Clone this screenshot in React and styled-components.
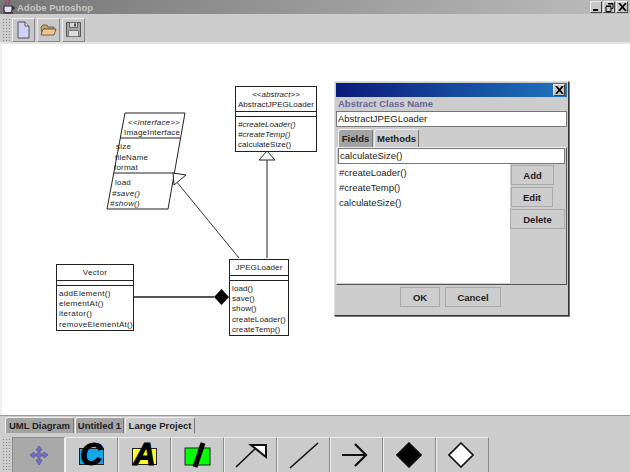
import styled, { createGlobalStyle } from "styled-components";

const Global = createGlobalStyle`
html, body { margin: 0; padding: 0; background: #ccc; overflow: hidden; }
* { box-sizing: border-box; }
`;

const Frame = styled.div`
width: 630px;
height: 472px;
display: flex;
flex-direction: column;
font-family: "Liberation Sans", Arial, sans-serif;
background: #cdcdcd;
color: #111;
`;

const TitleBar = styled.div`
height: 14px;
display: flex;
align-items: center;
padding: 0 2px;
background: linear-gradient(to right, #767676, #bdbdbd);
`;

const TitleText = styled.span`
margin-left: 2px;
font-size: 9.5px;
font-weight: 700;
color: #c6c6c6;
flex: 1;
`;

const WinButton = styled.div`
width: 12px;
height: 12px;
margin-left: 1px;
display: flex;
align-items: center;
justify-content: center;
background: #c8c8c8;
border: 1px solid;
border-color: #eee #444 #444 #eee;
`;

const ToolBar = styled.div`
height: 28px;
display: flex;
align-items: center;
padding: 3px 0 0 2px;
gap: 2px;
background: #cdcdcd;
`;

const Grip = styled.div`
width: 8px;
height: ${(p) => p.$h}px;
margin-right: ${(p) => p.$mr}px;
background-image: radial-gradient(#8a8a8a 0.8px, transparent 1px);
background-size: 3px 3px;
`;

const IconButton = styled.div`
width: 23px;
height: 24px;
display: flex;
align-items: center;
justify-content: center;
background: #c8c8c8;
border: 1px solid;
border-color: #eee #888 #888 #eee;
`;

const Canvas = styled.div`
position: relative;
height: 373px;
background: #fff;
border-top: 2px solid #e4e4e4;
border-left: 2px solid #eee;
`;

const Wires = styled.svg`
position: absolute;
left: -2px;
top: -2px;
`;

const ClassNode = styled.div`
position: absolute;
left: ${(p) => p.$x}px;
top: ${(p) => p.$y}px;
width: ${(p) => p.$w}px;
background: #fff;
border: 1px solid #222;
font-size: 8px;
letter-spacing: ${(p) => p.$ls}px;
color: #222;
`;

const Section = styled.div`
height: ${(p) => (p.$h ? `${p.$h}px` : "auto")};
border-top: ${(p) => (p.$first ? "none" : "1px solid #222")};
padding: ${(p) => (p.$center ? "2px 0 0" : "3px 0 0 2px")};
text-align: ${(p) => (p.$center ? "center" : "left")};
line-height: 10.2px;
display: ${(p) => (p.$center ? "flex" : "block")};
flex-direction: column;
justify-content: center;
`;

const Spacer = styled.div`
height: 5px;
border-top: 1px solid #222;
`;

const Member = styled.div`
font-style: ${(p) => (p.$italic ? "italic" : "normal")};
white-space: nowrap;
`;

const InterfaceNode = styled.div`
position: absolute;
left: 103px;
top: 68px;
width: 82px;
height: 98px;
font-size: 8px;
letter-spacing: 0.2px;
color: #222;
`;

const InterfaceShape = styled.svg`
position: absolute;
left: 0;
top: 0;
`;

const InterfaceRow = styled.div`
position: absolute;
left: ${(p) => p.$x}px;
top: ${(p) => p.$y}px;
font-style: ${(p) => (p.$italic ? "italic" : "normal")};
white-space: nowrap;
`;

const Dialog = styled.div`
position: absolute;
left: 332px;
top: 37px;
width: 235px;
height: 235px;
display: flex;
flex-direction: column;
background: #cdcdcd;
border: 1px solid;
border-color: #ddd #333 #333 #ddd;
box-shadow: 1px 1px 0 #777;
padding: 1px;
`;

const DialogTitle = styled.div`
height: 14px;
flex: none;
display: flex;
justify-content: flex-end;
align-items: center;
padding-right: 2px;
background: linear-gradient(to right, #0a1a78, #1f74bd);
`;

const DialogLabel = styled.div`
height: 14px;
flex: none;
font-size: 9.5px;
font-weight: 700;
line-height: 14px;
padding-left: 2px;
color: #66669a;
`;

const TextInput = styled.div`
height: 16px;
flex: none;
background: #fff;
border: 1px solid #777;
font-size: 9.5px;
line-height: 14px;
padding-left: 1px;
color: #222;
`;

const TabRow = styled.div`
display: flex;
height: ${(p) => p.$h}px;
flex: none;
align-items: flex-end;
padding-left: ${(p) => p.$pad}px;
gap: 1px;
`;

const Tab = styled.div`
height: ${(p) => p.$h}px;
width: ${(p) => p.$w}px;
flex: none;
font-size: 9.5px;
font-weight: 700;
white-space: nowrap;
text-align: center;
line-height: ${(p) => p.$h - 1}px;
color: #222;
background: ${(p) => (p.$active ? "#cdcdcd" : "#a3a3a3")};
border: 1px solid;
border-bottom: none;
border-color: #eee #777 #777 #eee;
border-radius: 3px 3px 0 0;
`;

const TabPanel = styled.div`
height: 138px;
flex: none;
padding: 0 1px 1px 0;
display: flex;
flex-direction: column;
border: 1px solid;
border-color: #eee #555 #555 #eee;
`;

const PanelInput = styled(TextInput)`
margin-left: 1px;
width: 227px;
`;

const PanelBody = styled.div`
flex: 1;
display: flex;
min-height: 0;
`;

const MemberList = styled.div`
width: 173px;
flex: none;
background: #fff;
padding: 1px 0 0 2px;
font-size: 9.5px;
line-height: 15px;
color: #222;
`;

const SideButtons = styled.div`
flex: 1;
display: flex;
flex-direction: column;
align-items: flex-start;
gap: 2px;
padding-top: 1px;
`;

const PushButton = styled.div`
width: ${(p) => p.$w}px;
height: 20px;
flex: none;
margin-left: ${(p) => p.$ml || 0}px;
display: flex;
align-items: center;
justify-content: center;
font-size: 9.5px;
font-weight: 700;
color: #222;
background: #cdcdcd;
border: 1px solid;
border-color: #eee #777 #777 #eee;
outline: 1px solid #aaa;
outline-offset: -1px;
`;

const DialogActions = styled.div`
flex: 1;
display: flex;
justify-content: center;
align-items: center;
gap: 5px;
padding-right: 2px;
padding-bottom: 5px;
`;

const BottomTabs = styled(TabRow)`
background: #cdcdcd;
border-top: 1px solid #999;
`;

const ShapeBar = styled.div`
flex: 1;
display: flex;
align-items: flex-end;
padding-left: 2px;
background: #cdcdcd;
`;

const ShapeButton = styled.div`
width: 53px;
height: 35px;
flex: none;
display: flex;
align-items: center;
justify-content: center;
padding-right: ${(p) => p.$pr || 0}px;
background: ${(p) => (p.$pressed ? "#a9a9a9" : "#cbcbcb")};
border: 1px solid;
border-bottom: none;
border-color: ${(p) => (p.$pressed ? "#8c8c8c #eee #eee #8c8c8c" : "#eee #8c8c8c #8c8c8c #eee")};
`;

const LetterIcon = styled.div`
position: relative;
width: 34px;
height: 26px;
display: flex;
align-items: center;
justify-content: center;
`;

const LetterBack = styled.div`
position: absolute;
left: 4px;
top: 6px;
width: 25px;
height: 17px;
background: ${(p) => p.$color};
border: 1px solid #222;
`;

const Letter = styled.span`
position: relative;
font-size: 31px;
font-weight: 700;
font-style: italic;
line-height: 26px;
color: #000;
-webkit-text-stroke: 1px #000;
`;

function JavaCup() {
  return (
    <svg width="13" height="14" viewBox="0 0 13 14">
      <path d="M2 6h8v4c0 2-2 3-4 3s-4-1-4-3z" fill="#dfe0f0" stroke="#222" />
      <path d="M10 7h2v2h-2" fill="none" stroke="#222" />
      <path d="M4 1c1 1-1 2 0 3M7 0c1 1-1 3 0 4" fill="none" stroke="#b03050" strokeWidth="1.4" />
      <path d="M1 13h10" stroke="#222" />
    </svg>
  );
}

function MinIcon() {
  return (
    <svg width="9" height="8" viewBox="0 0 9 8">
      <path d="M1 7h5" stroke="#000" strokeWidth="2" />
    </svg>
  );
}

function MaxIcon() {
  return (
    <svg width="9" height="9" viewBox="0 0 9 9">
      <path d="M3 .5h5v5h-2M1 3.5h5v5h-5z" fill="none" stroke="#000" />
      <path d="M1 3h5M3 1h5" stroke="#000" />
    </svg>
  );
}

function CloseIcon() {
  return (
    <svg width="9" height="8" viewBox="0 0 9 8">
      <path d="M1 0l7 8M8 0l-7 8" stroke="#000" strokeWidth="1.8" />
    </svg>
  );
}

function NewIcon() {
  return (
    <svg width="13" height="18" viewBox="0 0 13 18">
      <path d="M1 1h7l4 4v12h-11z" fill="#d2d2f6" stroke="#555" />
      <path d="M8 1v4h4" fill="#e8e8f8" stroke="#555" />
    </svg>
  );
}

function OpenIcon() {
  return (
    <svg width="17" height="12" viewBox="0 0 17 12">
      <path d="M1 3l2-2h4l1 2h6v2h-10l-2 5z" fill="#d89c5c" stroke="#665" />
      <path d="M1 11l2-6h13l-2 6z" fill="#f4c48c" stroke="#665" />
    </svg>
  );
}

function SaveIcon() {
  return (
    <svg width="15" height="15" viewBox="0 0 15 15">
      <path d="M.5 .5h14v14h-14z" fill="#a4a4a4" stroke="#555" />
      <path d="M3.5 .5h8v5h-8z" fill="#d4d4d4" stroke="#666" />
      <path d="M8 1.5h2v3h-2z" fill="#555" />
      <path d="M2.5 8.5h10v6h-10z" fill="#dcdcdc" stroke="#777" />
    </svg>
  );
}

function MoveIcon() {
  return (
    <svg width="20" height="20" viewBox="0 0 20 20" fill="#7a72c0" stroke="#5a52a4" strokeWidth="0.8">
      <path d="M10 1l3 4h-2v4h4v-2l4 3-4 3v-2h-4v4h2l-3 5-3-5h2v-4h-4v2l-4-3 4-3v2h4v-4h-2z" />
    </svg>
  );
}

function SlashIcon() {
  return (
    <svg width="34" height="26" viewBox="0 0 34 26">
      <rect x="4" y="6" width="25" height="17" fill="#0f0" stroke="#222" />
      <path d="M22 1l-8 24" stroke="#000" strokeWidth="5" />
    </svg>
  );
}

function InheritIcon() {
  return (
    <svg width="34" height="28" viewBox="0 0 34 28">
      <path d="M2 26L22 7" stroke="#111" strokeWidth="1.6" />
      <path d="M17 4h15v12z" fill="#fff" stroke="#111" strokeWidth="2" />
    </svg>
  );
}

function LineIcon() {
  return (
    <svg width="34" height="28" viewBox="0 0 34 28">
      <path d="M3 27L31 2" stroke="#111" strokeWidth="1.6" />
    </svg>
  );
}

function ArrowIcon() {
  return (
    <svg width="30" height="26" viewBox="0 0 30 26">
      <path d="M2 13h24M15 2l11 11-11 11" fill="none" stroke="#111" strokeWidth="2.2" />
    </svg>
  );
}

function DiamondIcon({ fill }) {
  return (
    <svg width="26" height="26" viewBox="0 0 26 26">
      <path d="M13 1l12 12-12 12L1 13z" fill={fill} stroke="#111" strokeWidth="1.6" />
    </svg>
  );
}

export default function App() {
  return (
    <Frame>
      <Global />
      <TitleBar>
        <JavaCup />
        <TitleText>Adobe Putoshop</TitleText>
        <WinButton><MinIcon /></WinButton>
        <WinButton><MaxIcon /></WinButton>
        <WinButton><CloseIcon /></WinButton>
      </TitleBar>
      <ToolBar>
        <Grip $h={24} $mr={0} />
        <IconButton><NewIcon /></IconButton>
        <IconButton><OpenIcon /></IconButton>
        <IconButton><SaveIcon /></IconButton>
      </ToolBar>
      <Canvas>
        <Wires width="630" height="373">
          <path d="M133 255H214" stroke="#555" strokeWidth="2" />
          <path d="M214 255l7.5-8 7.5 8-7.5 8z" fill="#000" />
          <path d="M267 118V216" stroke="#222" />
          <path d="M259 118l8-9 8 9z" fill="#fff" stroke="#222" />
          <path d="M176 139L239 216" stroke="#333" />
        </Wires>

        <InterfaceNode>
          <InterfaceShape width="82" height="98">
            <path d="M20 1H80L63 97H2z" fill="#fff" stroke="#222" />
            <path d="M15 26H76M9 61H70" stroke="#222" />
            <path d="M68 61l13 2-12 10z" fill="#fff" stroke="#222" />
          </InterfaceShape>
          <InterfaceRow $x={23} $y={6} $italic>&lt;&lt;interface&gt;&gt;</InterfaceRow>
          <InterfaceRow $x={19} $y={16}>ImageInterface</InterfaceRow>
          <InterfaceRow $x={11} $y={30}>size</InterfaceRow>
          <InterfaceRow $x={10} $y={41}>fileName</InterfaceRow>
          <InterfaceRow $x={9} $y={51}>format</InterfaceRow>
          <InterfaceRow $x={10} $y={66}>load</InterfaceRow>
          <InterfaceRow $x={7} $y={77} $italic>#save()</InterfaceRow>
          <InterfaceRow $x={5} $y={87} $italic>#show()</InterfaceRow>
        </InterfaceNode>

        <ClassNode $x={233} $y={42} $w={82} $ls={0.05}>
          <Section $first $center $h={24}>
            <Member $italic>&lt;&lt;abstract&gt;&gt;</Member>
            <Member>AbstractJPEGLoader</Member>
          </Section>
          <Spacer />
          <Section>
            <Member $italic>#createLoader()</Member>
            <Member $italic>#createTemp()</Member>
            <Member>calculateSize()</Member>
          </Section>
        </ClassNode>

        <ClassNode $x={54} $y={220} $w={78} $ls={0.3}>
          <Section $first $center $h={15}>
            <Member>Vector</Member>
          </Section>
          <Spacer />
          <Section>
            <Member>addElement()</Member>
            <Member>elementAt()</Member>
            <Member>iterator()</Member>
            <Member>removeElementAt()</Member>
          </Section>
        </ClassNode>

        <ClassNode $x={227} $y={215} $w={60} $ls={0.1}>
          <Section $first $center $h={15}>
            <Member>JPEGLoader</Member>
          </Section>
          <Spacer />
          <Section>
            <Member>load()</Member>
            <Member>save()</Member>
            <Member>show()</Member>
            <Member>createLoader()</Member>
            <Member>createTemp()</Member>
          </Section>
        </ClassNode>

        <Dialog>
          <DialogTitle>
            <WinButton><CloseIcon /></WinButton>
          </DialogTitle>
          <DialogLabel>Abstract Class Name</DialogLabel>
          <TextInput>AbstractJPEGLoader</TextInput>
          <TabRow $h={20} $pad={2}>
            <Tab $w={35} $h={18}>Fields</Tab>
            <Tab $w={45} $h={18} $active>Methods</Tab>
          </TabRow>
          <TabPanel>
            <PanelInput>calculateSize()</PanelInput>
            <PanelBody>
              <MemberList>
                <div>#createLoader()</div>
                <div>#createTemp()</div>
                <div>calculateSize()</div>
              </MemberList>
              <SideButtons>
                <PushButton $w={43} $ml={1}>Add</PushButton>
                <PushButton $w={42} $ml={1}>Edit</PushButton>
                <PushButton $w={55}>Delete</PushButton>
              </SideButtons>
            </PanelBody>
          </TabPanel>
          <DialogActions>
            <PushButton $w={40}>OK</PushButton>
            <PushButton $w={56}>Cancel</PushButton>
          </DialogActions>
        </Dialog>
      </Canvas>

      <BottomTabs $h={18} $pad={5}>
        <Tab $w={69} $h={16}>UML Diagram</Tab>
        <Tab $w={49} $h={16}>Untitled 1</Tab>
        <Tab $w={70} $h={16} $active>Lange Project</Tab>
      </BottomTabs>
      <ShapeBar>
        <Grip $h={34} $mr={2} />
        <ShapeButton $pressed><MoveIcon /></ShapeButton>
        <ShapeButton>
          <LetterIcon><LetterBack $color="#12a8e8" /><Letter>C</Letter></LetterIcon>
        </ShapeButton>
        <ShapeButton>
          <LetterIcon><LetterBack $color="#ffff20" /><Letter>A</Letter></LetterIcon>
        </ShapeButton>
        <ShapeButton><SlashIcon /></ShapeButton>
        <ShapeButton><InheritIcon /></ShapeButton>
        <ShapeButton><LineIcon /></ShapeButton>
        <ShapeButton $pr={3}><ArrowIcon /></ShapeButton>
        <ShapeButton $pr={2}><DiamondIcon fill="#000" /></ShapeButton>
        <ShapeButton $pr={4}><DiamondIcon fill="#fff" /></ShapeButton>
      </ShapeBar>
    </Frame>
  );
}
